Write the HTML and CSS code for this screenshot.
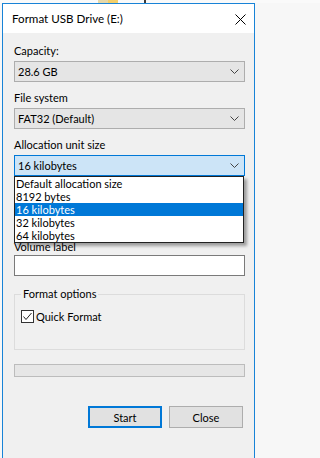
FILE: index.html
```html
<!DOCTYPE html>
<html lang="en">
<head>
<meta charset="utf-8">
<title>Format USB Drive (E:)</title>
<link rel="stylesheet" href="styles.css">
</head>
<body>
<div class="window">
  <div class="titlebar">
    <span class="title">Format USB Drive (E:)</span>
    <svg class="close" width="11" height="11" viewBox="0 0 11 11"><path d="M0.5 0.5 L10.5 10.5 M10.5 0.5 L0.5 10.5" stroke="#000" stroke-width="1" fill="none"/></svg>
  </div>
  <div class="dialog">
    <div class="field">
      <div class="label">Capacity:</div>
      <div class="combo"><span>28.6 GB</span><svg class="chev" width="9" height="5" viewBox="0 0 9 5"><polyline points="0.5,0.5 4.5,4.5 8.5,0.5" fill="none" stroke="#444" stroke-width="1"/></svg></div>
    </div>
    <div class="field">
      <div class="label">File system</div>
      <div class="combo"><span>FAT32 (Default)</span><svg class="chev" width="9" height="5" viewBox="0 0 9 5"><polyline points="0.5,0.5 4.5,4.5 8.5,0.5" fill="none" stroke="#444" stroke-width="1"/></svg></div>
    </div>
    <div class="field">
      <div class="label">Allocation unit size</div>
      <div class="combo-wrap">
        <div class="combo combo-open"><span>16 kilobytes</span><svg class="chev" width="9" height="5" viewBox="0 0 9 5"><polyline points="0.5,0.5 4.5,4.5 8.5,0.5" fill="none" stroke="#444" stroke-width="1"/></svg></div>
        <ul class="dropdown">
          <li>Default allocation size</li>
          <li>8192 bytes</li>
          <li class="selected">16 kilobytes</li>
          <li>32 kilobytes</li>
          <li>64 kilobytes</li>
        </ul>
      </div>
    </div>
    <div class="field field-volume">
      <div class="label label-tight">Volume label</div>
      <div class="textbox"></div>
    </div>
    <fieldset class="group">
      <legend>Format options</legend>
      <label class="check">
        <span class="box"><svg width="11" height="11" viewBox="0 0 11 11"><polyline points="1.5,5.5 4,8.5 9.5,2" fill="none" stroke="#222" stroke-width="1"/></svg></span>
        <span>Quick Format</span>
      </label>
    </fieldset>
    <div class="progress"></div>
    <div class="buttons">
      <button class="btn btn-default">Start</button>
      <button class="btn">Close</button>
    </div>
  </div>
</div>
</body>
</html>
```
FILE: styles.css
```css
html, body {
  margin: 0;
  height: 100%;
}
body {
  padding: 3px 2px 0 2px;
  box-sizing: border-box;
  background-color: #f7f7f7;
  background-image: linear-gradient(to right, #fafafa 0, #fafafa 98px, #e6d8a8 98px, #e6d8a8 108px, #f3cf6a 108px, #f3cf6a 118px, #fafafa 118px, #fafafa 144px, #3a3a3a 144px, #3a3a3a 146px, #fafafa 146px);
  background-size: 100% 3px;
  background-repeat: no-repeat;
  font-family: "Lato", "Liberation Sans", sans-serif;
  font-size: 11px;
  color: #000;
  overflow: hidden;
}
.window {
  width: 253px;
  height: 100%;
  box-sizing: border-box;
  border: 1px solid #1883d7;
  border-bottom: none;
  background: #f0f0f0;
  display: flex;
  flex-direction: column;
}
.titlebar {
  height: 29px;
  background: #fff;
  display: flex;
  align-items: center;
  justify-content: space-between;
  padding: 0 8px 0 9px;
  flex-shrink: 0;
}
.title {
  font-size: 11.6px;
  line-height: 14px;
  margin-top: 1px;
}
.close {
  display: block;
  margin-top: 1px;
}
.dialog {
  padding: 11px 9px 0 11px;
  display: flex;
  flex-direction: column;
}
.field {
  display: flex;
  flex-direction: column;
  margin-bottom: 9px;
}
.label {
  line-height: 14px;
  margin-bottom: 3px;
}
.label-tight {
  margin-bottom: 1px;
}
.combo {
  height: 21px;
  box-sizing: border-box;
  border: 1px solid #adadad;
  background: #e5e5e5;
  display: flex;
  align-items: center;
  justify-content: space-between;
  padding: 0 5px 0 3px;
  line-height: 19px;
}
.combo-open {
  background: #cce4f7;
  border-color: #0078d7;
}
.chev {
  display: block;
}
.combo-wrap {
  position: relative;
}
.dropdown {
  position: absolute;
  left: 0;
  top: 100%;
  width: calc(100% - 1px);
  margin: 0;
  padding: 0;
  list-style: none;
  background: #fff;
  border: 1px solid #222;
  box-sizing: border-box;
  box-shadow: 3px 3px 3px rgba(0, 0, 0, 0.35);
  z-index: 5;
}
.dropdown li {
  height: 13px;
  line-height: 13px;
  padding-left: 1px;
  white-space: nowrap;
}
.dropdown li.selected {
  background: #0078d7;
  color: #fff;
}
.field-volume {
  margin-top: 55px;
  margin-bottom: 0;
}
.textbox {
  height: 21px;
  box-sizing: border-box;
  border: 1px solid #7a7a7a;
  background: #fff;
}
.group {
  margin: 11px 0 0 0;
  border: 1px solid #dcdcdc;
  padding: 9px 0 26px 6px;
}
.group legend {
  padding: 0 2px;
  line-height: 14px;
}
.check {
  display: flex;
  align-items: center;
  gap: 2px;
  line-height: 13px;
}
.box {
  width: 13px;
  height: 13px;
  box-sizing: border-box;
  border: 1px solid #333;
  background: #fff;
  display: flex;
  align-items: center;
  justify-content: center;
}
.box svg {
  display: block;
}
.progress {
  margin-top: 14px;
  height: 13px;
  box-sizing: border-box;
  border: 1px solid #bcbcbc;
  background: #e6e6e6;
}
.buttons {
  margin-top: 29px;
  display: flex;
  justify-content: flex-end;
  gap: 7px;
  padding-right: 2px;
}
.btn {
  width: 74px;
  height: 22px;
  box-sizing: border-box;
  border: 1px solid #adadad;
  background: #e1e1e1;
  font-family: "Lato", "Liberation Sans", sans-serif;
  font-size: 11px;
  color: #000;
  padding: 0;
  margin: 0;
}
.btn-default {
  border: 2px solid #0078d7;
}
```
